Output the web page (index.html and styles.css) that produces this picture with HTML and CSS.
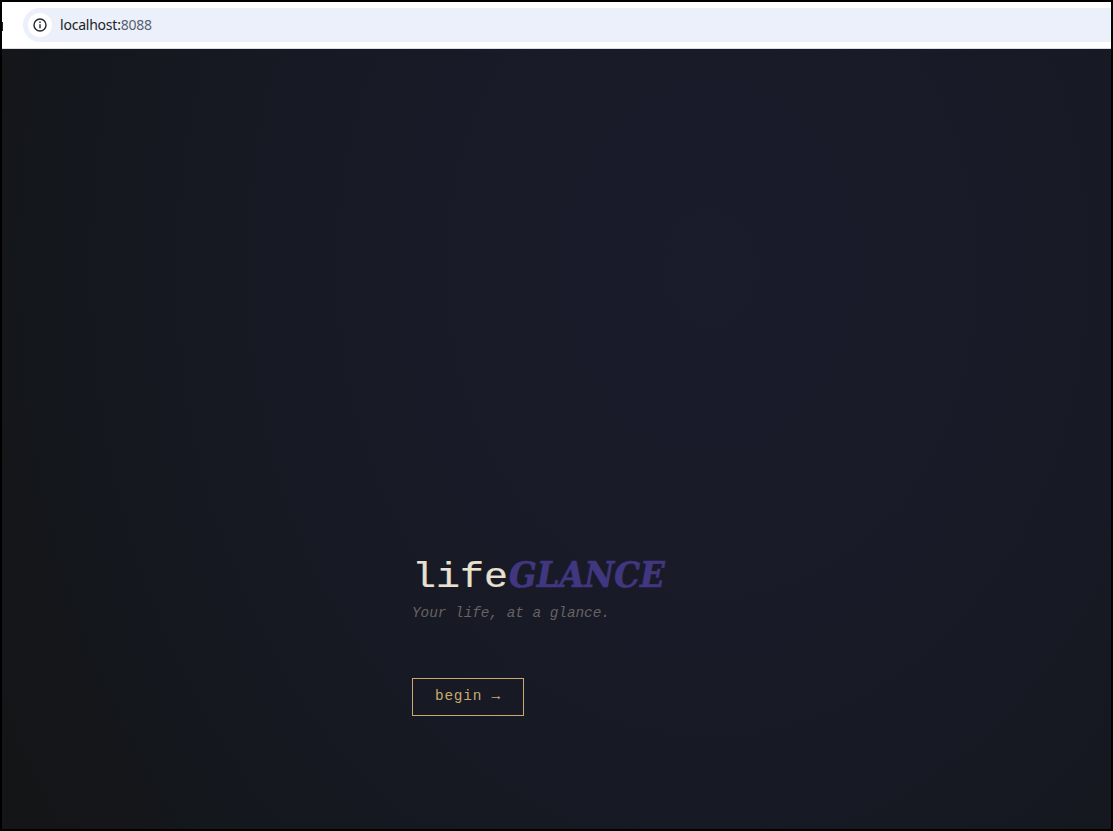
FILE: index.html
```html
<!DOCTYPE html>
<html lang="en">
<head>
<meta charset="utf-8">
<title>lifeGLANCE</title>
<link rel="stylesheet" href="styles.css">
</head>
<body>
<div class="window">
  <header class="toolbar">
    <span class="nav-edge"></span>
    <div class="address">
      <span class="site-info">
        <svg width="14" height="14" viewBox="0 0 14 14" fill="none" stroke="#24262a" stroke-width="1.4">
          <circle cx="7" cy="7" r="6"/>
          <path d="M7 6.2v4M7 3.6v1.4"/>
        </svg>
      </span>
      <span class="url">localhost:<span class="port">8088</span></span>
    </div>
  </header>
  <main class="page">
    <section class="intro">
      <h1 class="title"><span class="plain">life</span><em class="accent">GLANCE</em></h1>
      <p class="tagline">Your life, at a glance.</p>
      <button class="begin">begin →</button>
    </section>
  </main>
</div>
</body>
</html>
```
FILE: styles.css
```css
* { box-sizing: border-box; }
body { margin: 0; }
.window {
  width: 1113px;
  height: 831px;
  border: 2px solid #000;
  display: flex;
  flex-direction: column;
  overflow: hidden;
}
.toolbar {
  height: 47px;
  flex: none;
  display: flex;
  align-items: flex-start;
  padding-top: 6px;
  background: #fff;
  border-bottom: 1px solid #d8dde2;
}
.nav-edge {
  width: 1px;
  height: 9px;
  margin: 14px 20px 0 0;
  background: #24262a;
}
.address {
  flex: 1;
  height: 34px;
  display: flex;
  align-items: center;
  gap: 8px;
  padding-left: 5px;
  border-radius: 17px 0 0 17px;
  background: #ebf0fa;
}
.site-info {
  width: 24px;
  height: 24px;
  display: flex;
  align-items: center;
  justify-content: center;
  border-radius: 50%;
  background: #fff;
}
.url {
  font: 14px/20px "Noto Sans", sans-serif;
  letter-spacing: -0.22px;
  color: #202226;
}
.port { color: #56606f; }
.page {
  flex: 1;
  padding: 505px 0 0 410px;
  background: radial-gradient(ellipse 800px 1000px at 64% 28%, #1a1c2c 0%, #171924 55%, #14171c 84%, #141517 100%);
}
.intro {
  display: flex;
  flex-direction: column;
  align-items: flex-start;
}
.title {
  display: flex;
  align-items: baseline;
  height: 44px;
  margin: 0;
  font: 400 35px/48px "Liberation Mono", monospace;
  color: #e8e0d0;
  white-space: nowrap;
}
.plain {
  width: 97px;
  transform: scaleX(1.143);
  transform-origin: left;
  -webkit-text-stroke: 0.2px #e8e0d0;
}
.accent {
  font-family: "DejaVu Serif Condensed", "DejaVu Serif", serif;
  font-stretch: condensed;
  font-size: 36px;
  font-weight: 700;
  font-style: italic;
  line-height: 1;
  -webkit-text-stroke: 0.7px #403780;
  color: #403780;
}
.tagline {
  margin: 5px 0 0;
  font: italic 14.4px/20px "Liberation Mono", monospace;
  letter-spacing: -0.03px;
  color: #666360;
}
.begin {
  width: 112px;
  height: 38px;
  margin-top: 55px;
  padding: 0 0 3px 22px;
  border: 1px solid #c9a96e;
  background: transparent;
  color: #c9a96e;
  font: 14.4px/18px "Liberation Mono", monospace;
  letter-spacing: 0.8px;
  text-align: left;
}
```
